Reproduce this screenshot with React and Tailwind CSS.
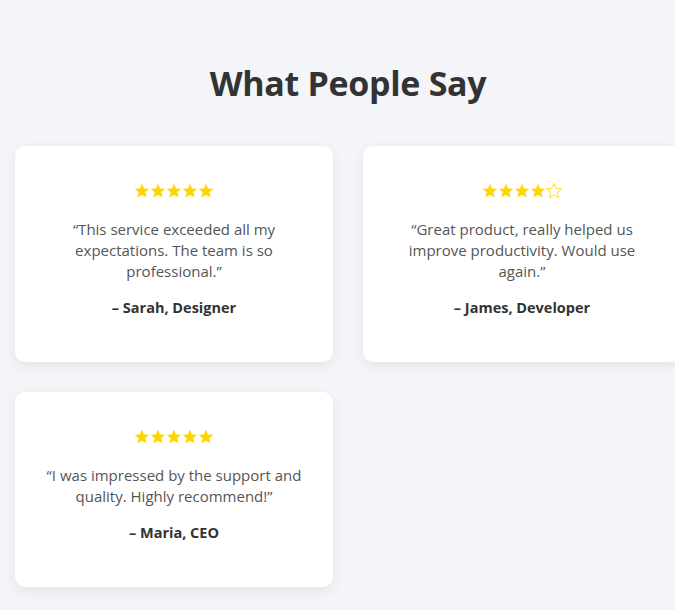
import React from 'react';

const testimonials = [
  { rating: 5, quote: '“This service exceeded all my expectations. The team is so professional.”', author: '– Sarah, Designer' },
  { rating: 4, quote: '“Great product, really helped us improve productivity. Would use again.”', author: '– James, Developer' },
  { rating: 5, quote: '“I was impressed by the support and quality. Highly recommend!”', author: '– Maria, CEO' },
];

const Star = ({ filled }) => (
  <svg width="16" height="17" viewBox="0.8 0.8 22.4 22.4" className="block">
    <path
      d="M12 2.2l2.9 6.9 7.4.6-5.6 4.9 1.7 7.3L12 18l-6.4 3.9 1.7-7.3-5.6-4.9 7.4-.6z"
      fill={filled ? '#ffd700' : 'none'}
      stroke="#ffd700"
      strokeWidth={filled ? 0 : 1.3}
      strokeLinejoin="round"
    />
  </svg>
);

const TestimonialCard = ({ rating, quote, author }) => (
  <div className="bg-white rounded-[10px] shadow-[0_4px_14px_rgba(0,0,0,0.07)] px-[30px] pt-[34px] pb-[44px] text-center">
    {/* Stars */}
    <div className="flex justify-center h-[20px] items-center">
      {[1, 2, 3, 4, 5].map((i) => (
        <Star key={i} filled={i <= rating} />
      ))}
    </div>
    <p className="mt-[19px] text-[#555] text-[15px] leading-[21px]">{quote}</p>
    <p className="mt-[15px] text-[#333] font-bold text-[14.5px] leading-[21px]">{author}</p>
  </div>
);

export default function App() {
  return (
    <div className="min-h-[610px] bg-[#f3f5f8] overflow-hidden" style={{ fontFamily: '"Open Sans", "Noto Sans", sans-serif' }}>
      <div className="w-[696px] px-[15px] pt-[59px] pb-[40px]">
        <h2 className="text-center text-[#333] font-bold text-[34px] leading-[48px] tracking-[-0.3px]">
          What People Say
        </h2>
        <div className="mt-[39px] grid grid-cols-[318px_318px] gap-x-[30px] gap-y-[30px]">
          {testimonials.map((t, idx) => (
            <TestimonialCard key={idx} {...t} />
          ))}
        </div>
      </div>
    </div>
  );
}
